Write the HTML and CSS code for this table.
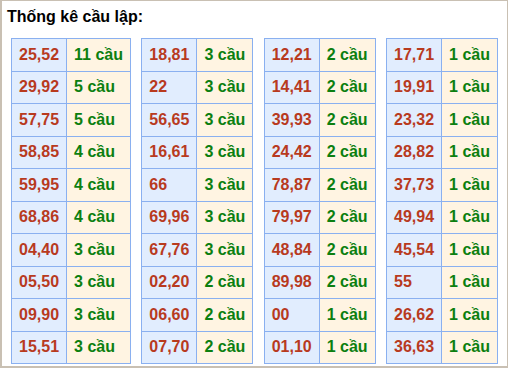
FILE: index.html
```html
<!DOCTYPE html>
<html>
<head>
<meta charset="utf-8">
<link rel="stylesheet" href="styles.css">
</head>
<body>
<div class="frame">
  <div class="title">Thống kê cầu lập:</div>
  <div class="tables">
    <table class="tk">
      <tr><td class="num">25,52</td><td class="cnt">11 cầu</td></tr>
      <tr><td class="num">29,92</td><td class="cnt">5 cầu</td></tr>
      <tr><td class="num">57,75</td><td class="cnt">5 cầu</td></tr>
      <tr><td class="num">58,85</td><td class="cnt">4 cầu</td></tr>
      <tr><td class="num">59,95</td><td class="cnt">4 cầu</td></tr>
      <tr><td class="num">68,86</td><td class="cnt">4 cầu</td></tr>
      <tr><td class="num">04,40</td><td class="cnt">3 cầu</td></tr>
      <tr><td class="num">05,50</td><td class="cnt">3 cầu</td></tr>
      <tr><td class="num">09,90</td><td class="cnt">3 cầu</td></tr>
      <tr><td class="num">15,51</td><td class="cnt">3 cầu</td></tr>
    </table>
    <table class="tk">
      <tr><td class="num">18,81</td><td class="cnt">3 cầu</td></tr>
      <tr><td class="num">22</td><td class="cnt">3 cầu</td></tr>
      <tr><td class="num">56,65</td><td class="cnt">3 cầu</td></tr>
      <tr><td class="num">16,61</td><td class="cnt">3 cầu</td></tr>
      <tr><td class="num">66</td><td class="cnt">3 cầu</td></tr>
      <tr><td class="num">69,96</td><td class="cnt">3 cầu</td></tr>
      <tr><td class="num">67,76</td><td class="cnt">3 cầu</td></tr>
      <tr><td class="num">02,20</td><td class="cnt">2 cầu</td></tr>
      <tr><td class="num">06,60</td><td class="cnt">2 cầu</td></tr>
      <tr><td class="num">07,70</td><td class="cnt">2 cầu</td></tr>
    </table>
    <table class="tk">
      <tr><td class="num">12,21</td><td class="cnt">2 cầu</td></tr>
      <tr><td class="num">14,41</td><td class="cnt">2 cầu</td></tr>
      <tr><td class="num">39,93</td><td class="cnt">2 cầu</td></tr>
      <tr><td class="num">24,42</td><td class="cnt">2 cầu</td></tr>
      <tr><td class="num">78,87</td><td class="cnt">2 cầu</td></tr>
      <tr><td class="num">79,97</td><td class="cnt">2 cầu</td></tr>
      <tr><td class="num">48,84</td><td class="cnt">2 cầu</td></tr>
      <tr><td class="num">89,98</td><td class="cnt">2 cầu</td></tr>
      <tr><td class="num">00</td><td class="cnt">1 cầu</td></tr>
      <tr><td class="num">01,10</td><td class="cnt">1 cầu</td></tr>
    </table>
    <table class="tk">
      <tr><td class="num">17,71</td><td class="cnt">1 cầu</td></tr>
      <tr><td class="num">19,91</td><td class="cnt">1 cầu</td></tr>
      <tr><td class="num">23,32</td><td class="cnt">1 cầu</td></tr>
      <tr><td class="num">28,82</td><td class="cnt">1 cầu</td></tr>
      <tr><td class="num">37,73</td><td class="cnt">1 cầu</td></tr>
      <tr><td class="num">49,94</td><td class="cnt">1 cầu</td></tr>
      <tr><td class="num">45,54</td><td class="cnt">1 cầu</td></tr>
      <tr><td class="num">55</td><td class="cnt">1 cầu</td></tr>
      <tr><td class="num">26,62</td><td class="cnt">1 cầu</td></tr>
      <tr><td class="num">36,63</td><td class="cnt">1 cầu</td></tr>
    </table>
  </div>
</div>
</body>
</html>
```

FILE: styles.css
```css
html, body {
  margin: 0;
  padding: 0;
  background: #ffffff;
}
body {
  font-family: "Liberation Sans", Arial, sans-serif;
}
.frame {
  box-sizing: border-box;
  width: 508px;
  height: 368px;
  border: 1px solid #c9c0b3;
  border-left-width: 2px;
  border-bottom-width: 2px;
  background: #ffffff;
  padding: 6px 0 0 5px;
}
.title {
  font-size: 16px;
  font-weight: bold;
  color: #000000;
  line-height: 19px;
  height: 19px;
}
.tables {
  display: flex;
  justify-content: space-between;
  margin-top: 12px;
  margin-left: 4px;
  width: 487px;
}
.tk {
  border-collapse: collapse;
  font-size: 16px;
  font-weight: bold;
}
.tk tr {
  height: 32.5px;
}
.tk td {
  border: 1px solid #8ab0f0;
  padding: 0 7px;
  white-space: nowrap;
  vertical-align: middle;
}
.num {
  background: #e1edfe;
  color: #b83a1e;
}
.cnt {
  background: #fff4e2;
  color: #0c7f10;
}
```
